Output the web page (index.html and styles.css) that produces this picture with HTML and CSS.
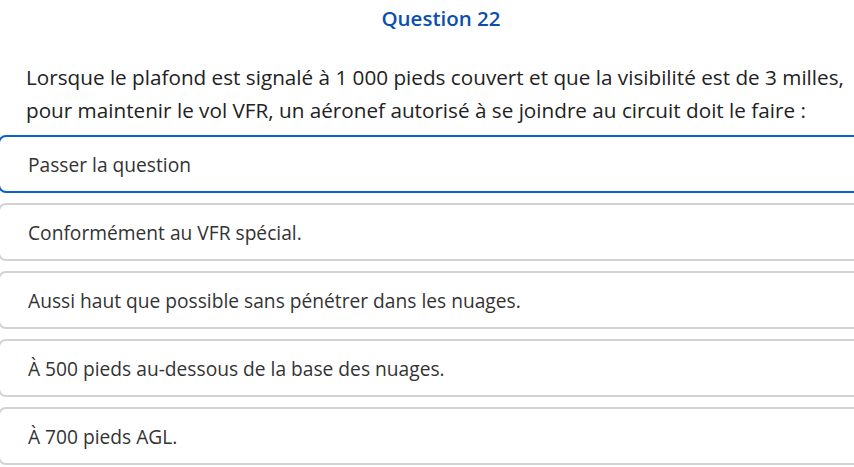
FILE: index.html
```html
<!DOCTYPE html>
<html lang="fr">
<head>
<meta charset="utf-8">
<title>Question 22</title>
<link rel="stylesheet" href="styles.css">
</head>
<body>
<main class="quiz">
  <h1 class="quiz-title">Question 22</h1>
  <p class="quiz-question">Lorsque le plafond est signalé à 1 000 pieds couvert et que la visibilité est de 3 milles, pour maintenir le vol VFR, un aéronef autorisé à se joindre au circuit doit le faire :</p>
  <div class="answers">
    <button class="answer answer--active">Passer la question</button>
    <button class="answer">Conformément au VFR spécial.</button>
    <button class="answer">Aussi haut que possible sans pénétrer dans les nuages.</button>
    <button class="answer">À 500 pieds au-dessous de la base des nuages.</button>
    <button class="answer">À 700 pieds AGL.</button>
  </div>
</main>
</body>
</html>
```
FILE: styles.css
```css
html, body {
  margin: 0;
  padding: 0;
  background: #ffffff;
  overflow: hidden;
}
body {
  font-family: "Open Sans", "Liberation Sans", sans-serif;
  color: #222222;
}
.quiz {
  width: 886px;
  margin-left: -2px;
}
.quiz-title {
  margin: 0;
  padding-top: 5px;
  height: 27px;
  line-height: 27px;
  font-size: 20.5px;
  font-weight: 600;
  color: #0b4fad;
  text-align: center;
}
.quiz-question {
  margin: 0;
  padding: 29px 30px 0 28px;
  font-size: 20.7px;
  line-height: 33px;
  color: #222222;
}
.answers {
  display: flex;
  flex-direction: column;
  gap: 10px;
  margin-top: 8px;
}
.answer {
  display: block;
  width: 100%;
  height: 58px;
  box-sizing: border-box;
  border: 2px solid #d3d3d3;
  border-radius: 8px;
  background: #ffffff;
  padding: 0 0 0 28px;
  text-align: left;
  font-family: "Open Sans", "Liberation Sans", sans-serif;
  font-size: 19.2px;
  color: #333333;
}
.answer--active {
  border-color: #0b5fd8;
}
```
